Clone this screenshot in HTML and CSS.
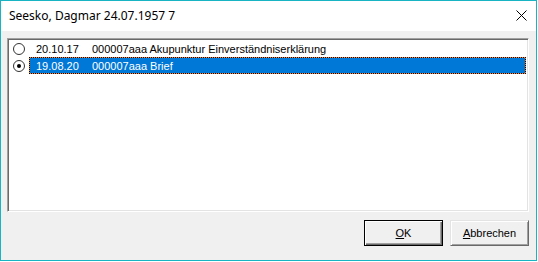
FILE: index.html
```html
<!DOCTYPE html>
<html>
<head>
<meta charset="utf-8">
<link rel="stylesheet" href="styles.css">
</head>
<body>
<div class="window">
  <div class="titlebar">
    <span class="title">Seesko, Dagmar 24.07.1957 7</span>
    <svg class="close" width="11" height="11" viewBox="0 0 11 11"><path d="M0.5 0.5 L10.5 10.5 M10.5 0.5 L0.5 10.5" stroke="#000" stroke-width="1" fill="none"/></svg>
  </div>
  <div class="client">
    <div class="listbox">
      <div class="row">
        <svg class="radio" width="12" height="12" viewBox="0 0 12 12"><circle cx="6" cy="6" r="5.5" fill="#fff" stroke="#333"/></svg>
        <div class="cell">
          <span class="date">20.10.17</span><span class="desc">000007aaa Akupunktur Einverständniserklärung</span>
        </div>
      </div>
      <div class="row">
        <svg class="radio" width="12" height="12" viewBox="0 0 12 12"><circle cx="6" cy="6" r="5.5" fill="#fff" stroke="#333"/><circle cx="6" cy="6" r="2" fill="#000"/></svg>
        <div class="cell selected">
          <span class="date">19.08.20</span><span class="desc">000007aaa Brief</span>
        </div>
      </div>
    </div>
    <div class="buttons">
      <button class="btn default"><u>O</u>K</button>
      <button class="btn"><u>A</u>bbrechen</button>
    </div>
  </div>
</div>
</body>
</html>
```
FILE: styles.css
```css
html, body {
  margin: 0;
  padding: 0;
  background: #fff;
}
.window {
  width: 535px;
  height: 259px;
  border: 1px solid #18b4c4;
  display: flex;
  flex-direction: column;
  font-family: "Liberation Sans", Arial, sans-serif;
}
.titlebar {
  height: 30px;
  background: #fff;
  display: flex;
  align-items: center;
  justify-content: space-between;
  padding: 0 9px 0 8px;
}
.title {
  font-family: "Noto Sans", "Open Sans", sans-serif;
  font-size: 12px;
  color: #000;
  margin-top: -2px;
}
.close {
  display: block;
  margin-top: -1px;
}
.client {
  flex: 1;
  background: #f0f0f0;
  padding: 7px 7px 14px 6px;
  display: flex;
  flex-direction: column;
}
.listbox {
  height: 169px;
  background: #fff;
  border-top: 1px solid #a0a0a0;
  border-left: 1px solid #a0a0a0;
  border-right: 1px solid #fff;
  border-bottom: 1px solid #fff;
  box-shadow: inset 1px 1px 0 #696969, inset -1px -1px 0 #e3e3e3;
  padding: 1px 2px 2px 2px;
}
.row {
  height: 17px;
  display: flex;
  align-items: center;
  font-size: 11px;
  color: #000;
}
.radio {
  flex: none;
  margin-left: 3px;
  margin-right: 4px;
  display: block;
}
.cell {
  flex: 1;
  height: 17px;
  box-sizing: border-box;
  display: flex;
  align-items: center;
  padding-left: 6px;
  border: 1px solid transparent;
}
.cell.selected {
  color: #fff;
  border: 1px dotted #000;
  background: linear-gradient(#0078d7, #0078d7) padding-box, linear-gradient(#ff8728, #ff8728) border-box;
}
.date {
  width: 56px;
  flex: none;
}
.buttons {
  margin-top: auto;
  display: flex;
  justify-content: flex-end;
  gap: 7px;
}
.btn {
  width: 79px;
  height: 26px;
  box-sizing: border-box;
  background: #f0f0f0;
  font-family: "Liberation Sans", Arial, sans-serif;
  font-size: 11px;
  color: #000;
  border-top: 1px solid #e3e3e3;
  border-left: 1px solid #e3e3e3;
  border-right: 1px solid #696969;
  border-bottom: 1px solid #696969;
  box-shadow: inset 1px 1px 0 #fff, inset -1px -1px 0 #a0a0a0;
  padding: 0;
  margin: 0;
}
.btn.default {
  border: 1px solid #000;
  box-shadow: inset 1px 1px 0 #fff, inset -1px -1px 0 #696969, inset -2px -2px 0 #a0a0a0;
}
.btn u {
  text-decoration: underline;
}
```
